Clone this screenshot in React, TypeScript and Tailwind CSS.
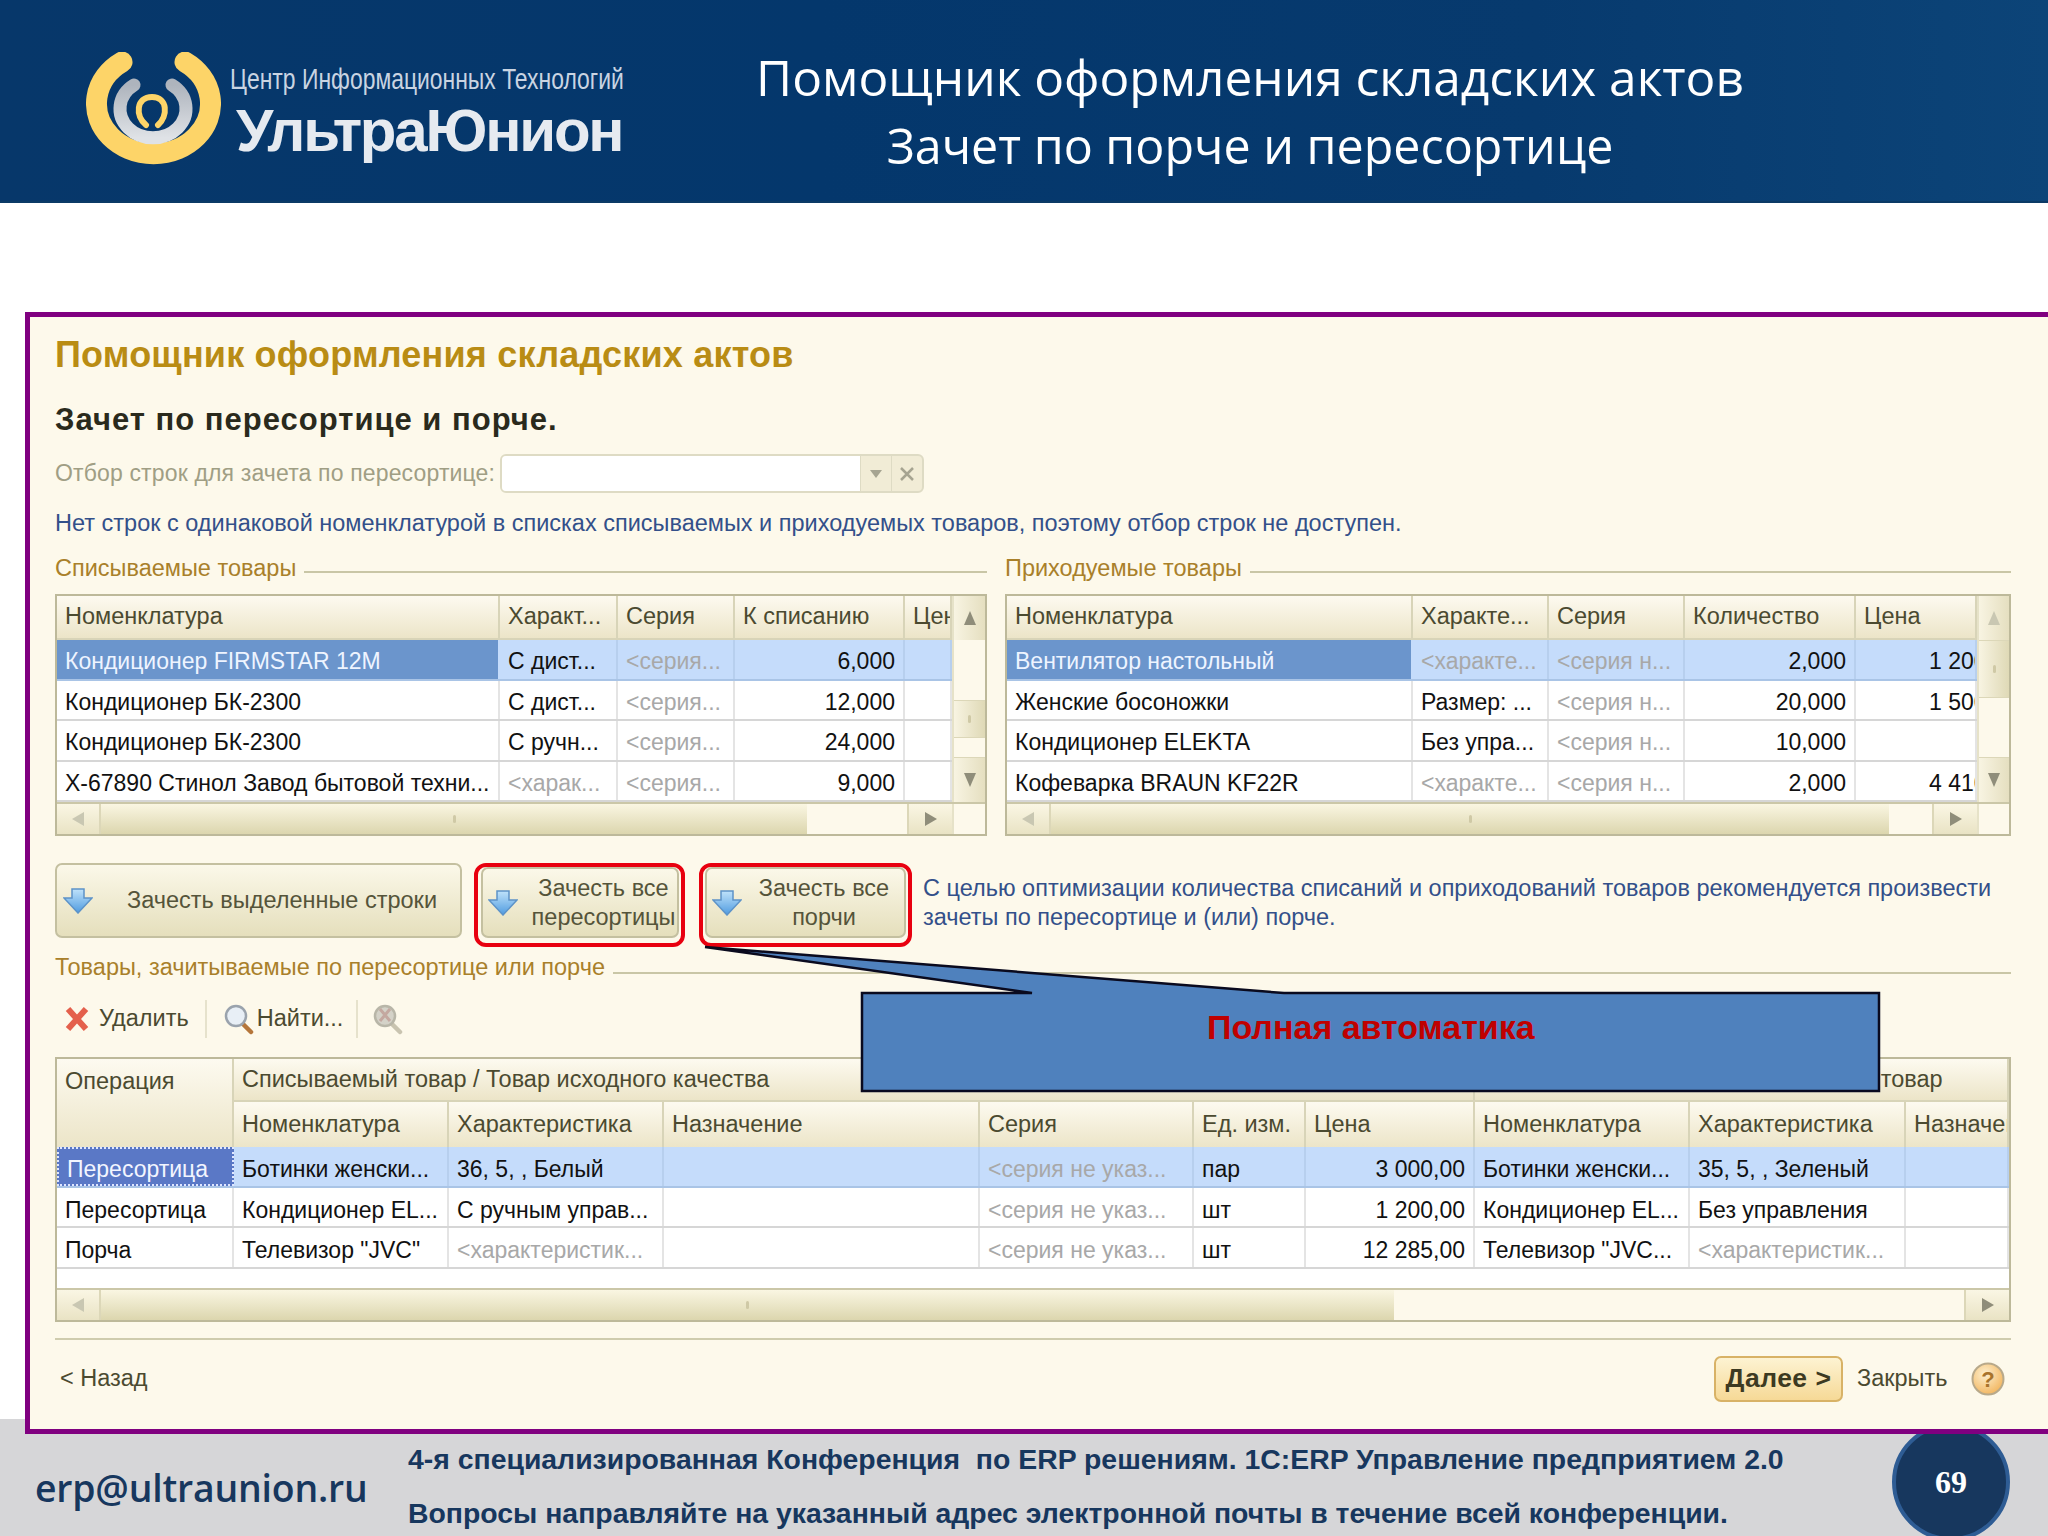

import React from "react";

const headerCell = "flex items-center min-w-0 overflow-hidden whitespace-nowrap pl-2 border-r-2 border-[#d8d4b8] text-[#4b4a30] text-[23.5px] bg-gradient-to-b from-[#fdfaf0] to-[#ece5c8]";
const gridLeft = "grid grid-cols-[443px_118px_117px_170px_47px]";
const gridRight = "grid grid-cols-[406px_136px_136px_171px_121px]";
const gridBottom = "grid grid-cols-[177px_215px_215px_316px_214px_112px_169px_215px_216px_103px]";

type C = { t: string; ph?: boolean; right?: boolean; pl?: boolean };

function Tri({ dir, light }: { dir: "u" | "d" | "l" | "r"; light?: boolean }) {
  const pts = { u: "7,1 13,15 1,15", d: "1,1 13,1 7,15", l: "13,1 13,15 1,8", r: "1,1 1,15 13,8" }[dir];
  return (
    <svg width="14" height="16" viewBox="0 0 14 16">
      <polygon points={pts} fill={light ? "#c9c7b2" : "#8f8d7a"} />
    </svg>
  );
}

function Grip() {
  return <div className="w-[3px] h-[8px] rounded-sm bg-[#cfc9a6]" />;
}

function Row({ grid, cells, selected, bottom }: { grid: string; cells: C[]; selected?: boolean; bottom?: boolean }) {
  return (
    <div className={`${grid} h-[40.5px] border-b-2 ${selected ? "border-[#a9c4e6]" : "border-[#d6d6d6]"}`}>
      {cells.map((c, i) => {
        const sel0 = selected && i === 0;
        let cls = "flex items-center min-w-0 overflow-hidden whitespace-nowrap px-2 border-r-2 ";
        cls += bottom ? "pt-[6px] " : "pt-[4px] ";
        if (sel0 && bottom) cls += "bg-[#5a78c6] text-[#f2f5ff] border-2 border-dotted border-[#dfe6ff] ";
        else if (sel0) cls += "bg-[#6b95cc] text-[#eef4ff] border-[#c5dcfb] ";
        else if (selected) cls += "bg-[#c5dcfb] border-[#b7cfee] ";
        else cls += "bg-white border-[#e4e4e4] ";
        if (!sel0) cls += c.ph ? "text-[#a8a8a8] " : "text-[#111111] ";
        if (c.right) cls += "justify-end ";
        if (c.pl) cls += "pl-[73px] ";
        return (
          <div key={i} className={cls}>
            {c.t}
          </div>
        );
      })}
    </div>
  );
}

function VScroll({ thumbTop, dimUp }: { thumbTop: boolean; dimUp?: boolean }) {
  return (
    <div className="flex-1 min-w-0 flex flex-col bg-[#fdf9eb] border-l-2 border-[#e6e2c8]">
      <div className="h-[44px] flex items-center justify-center bg-gradient-to-r from-[#f8f4e2] to-[#e5dfc0]">
        <Tri dir="u" light={dimUp} />
      </div>
      {thumbTop ? null : <div className="h-[60px]" />}
      <div className={`${thumbTop ? "h-[58px]" : "h-[38px]"} flex items-center justify-center bg-gradient-to-r from-[#f8f4e2] to-[#dfd9b6] border-y border-[#dcd7b8]`}>
        <Grip />
      </div>
      <div className="flex-1" />
      <div className="h-[45px] flex items-center justify-center bg-gradient-to-r from-[#f8f4e2] to-[#e5dfc0] border-t border-[#dcd7b8]">
        <Tri dir="d" />
      </div>
    </div>
  );
}

function HScroll({ thumb, blank, corner }: { thumb: string; blank: string; corner?: boolean }) {
  return (
    <div className="flex h-[32px] flex-1 border-t-2 border-[#cbc7a8] bg-[#fdf9eb]">
      <div className="w-[44px] flex items-center justify-center border-r-2 border-[#dcd7b8] bg-gradient-to-b from-[#faf6e4] to-[#e9e3c4]">
        <Tri dir="l" light />
      </div>
      <div className={`${thumb} flex items-center justify-center bg-gradient-to-b from-[#faf6e2] to-[#dcd6ae]`}>
        <Grip />
      </div>
      <div className={blank} />
      <div className="w-[45px] flex items-center justify-center border-l-2 border-[#dcd7b8] bg-gradient-to-b from-[#faf6e4] to-[#e9e3c4]">
        <Tri dir="r" />
      </div>
      {corner ? <div className="flex-1 border-l-2 border-[#e6e2c8]" /> : null}
    </div>
  );
}

function GroupLabel({ text, lineClass }: { text: string; lineClass: string }) {
  return (
    <div className="flex items-center h-[30px] gap-[8px]">
      <span className="text-[23.5px] text-[#a9802a] whitespace-nowrap">{text}</span>
      <div className={`flex-1 h-[2px] bg-[#c9c6a6] ${lineClass}`} />
    </div>
  );
}

function DownArrow() {
  return (
    <svg width="30" height="26" viewBox="0 0 30 26" className="shrink-0">
      <defs>
        <linearGradient id="arrowFill" x1="0" y1="0" x2="0" y2="1">
          <stop offset="0" stopColor="#bfe2fa" />
          <stop offset="1" stopColor="#4f9be0" />
        </linearGradient>
      </defs>
      <polygon points="9,1 21,1 21,10 29,10 15,25 1,10 9,10" fill="url(#arrowFill)" stroke="#5d93c8" strokeWidth="1.5" />
    </svg>
  );
}

function Lens({ dim }: { dim?: boolean }) {
  return (
    <svg width="32" height="32" viewBox="0 0 32 32">
      <line x1="19" y1="20" x2="28" y2="29" stroke={dim ? "#c9c4b0" : "#b5763a"} strokeWidth="4.5" strokeLinecap="round" />
      <circle cx="13" cy="13" r="10" fill={dim ? "#d4d2c8" : "#e8eff6"} stroke={dim ? "#b8b6a8" : "#9aa3ad"} strokeWidth="2.5" />
      {dim ? <path d="M8 6 L18 18 M18 6 L8 18" stroke="#c4a8a0" strokeWidth="3" /> : null}
    </svg>
  );
}

const leftRows: C[][] = [
  [{ t: "Кондиционер FIRMSTAR 12M" }, { t: "С дист..." }, { t: "<серия...", ph: true }, { t: "6,000", right: true }, { t: "" }],
  [{ t: "Кондиционер БК-2300" }, { t: "С дист..." }, { t: "<серия...", ph: true }, { t: "12,000", right: true }, { t: "" }],
  [{ t: "Кондиционер БК-2300" }, { t: "С ручн..." }, { t: "<серия...", ph: true }, { t: "24,000", right: true }, { t: "" }],
  [{ t: "Х-67890 Стинол Завод бытовой техни..." }, { t: "<харак...", ph: true }, { t: "<серия...", ph: true }, { t: "9,000", right: true }, { t: "" }],
];
const rightRows: C[][] = [
  [{ t: "Вентилятор настольный" }, { t: "<характе...", ph: true }, { t: "<серия н...", ph: true }, { t: "2,000", right: true }, { t: "1 200,00", pl: true }],
  [{ t: "Женские босоножки" }, { t: "Размер: ..." }, { t: "<серия н...", ph: true }, { t: "20,000", right: true }, { t: "1 500,00", pl: true }],
  [{ t: "Кондиционер ELEKTA" }, { t: "Без упра..." }, { t: "<серия н...", ph: true }, { t: "10,000", right: true }, { t: "" }],
  [{ t: "Кофеварка BRAUN KF22R" }, { t: "<характе...", ph: true }, { t: "<серия н...", ph: true }, { t: "2,000", right: true }, { t: "4 410,00", pl: true }],
];
const bottomRows: C[][] = [
  [{ t: "Пересортица" }, { t: "Ботинки женски..." }, { t: "36, 5, , Белый" }, { t: "" }, { t: "<серия не указ...", ph: true }, { t: "пар" }, { t: "3 000,00", right: true }, { t: "Ботинки женски..." }, { t: "35, 5, , Зеленый" }, { t: "" }],
  [{ t: "Пересортица" }, { t: "Кондиционер EL..." }, { t: "С ручным управ..." }, { t: "" }, { t: "<серия не указ...", ph: true }, { t: "шт" }, { t: "1 200,00", right: true }, { t: "Кондиционер EL..." }, { t: "Без управления" }, { t: "" }],
  [{ t: "Порча" }, { t: "Телевизор \"JVC\"" }, { t: "<характеристик...", ph: true }, { t: "" }, { t: "<серия не указ...", ph: true }, { t: "шт" }, { t: "12 285,00", right: true }, { t: "Телевизор \"JVC..." }, { t: "<характеристик...", ph: true }, { t: "" }],
];

const btn = "flex items-center rounded-[7px] border-2 border-[#c4c0a0] bg-gradient-to-b from-[#fbf8e9] to-[#e5dfbc] text-[#55543a] text-[23.5px] leading-[29px]";

export default function App() {
  return (
    <div className="relative w-[2048px] h-[1536px] overflow-hidden bg-white font-['Liberation_Sans',Arial,sans-serif]">
      <header className="h-[203px] flex bg-[linear-gradient(90deg,#07376a_0%,#04376c_40%,#073a6e_75%,#0c4478_100%)] border-b-2 border-[#0b3a66]">
        <div className="w-[640px] pl-[86px] pt-[52px] flex items-start">
          <svg width="135" height="121" viewBox="86 52 135 121" className="shrink-0">
            <defs>
              <linearGradient id="ring" x1="0" y1="0" x2="0" y2="1">
                <stop offset="0" stopColor="#aeb4bd" />
                <stop offset="1" stopColor="#dfe2e6" />
              </linearGradient>
            </defs>
            <path d="M122 62 A 57 50 0 1 0 185 62" fill="none" stroke="#fdd468" strokeWidth="21" strokeLinecap="round" />
            <path d="M134 85 A 33 29 0 1 0 172 85" fill="none" stroke="url(#ring)" strokeWidth="13" strokeLinecap="round" />
            <path d="M146 125 C 135 116 136 97 152 97 C 168 97 168 116 158 125" fill="none" stroke="#fdd468" strokeWidth="6" strokeLinecap="round" />
          </svg>
          <div className="ml-[9px] flex flex-col">
            <div className="text-[29px] leading-[40px] mt-[7px] text-[#c9d4e2] whitespace-nowrap origin-left scale-x-[0.79]">Центр Информационных Технологий</div>
            <div className="text-[60px] leading-[64px] mt-[0px] ml-[6px] font-bold text-[#e6eaf0] whitespace-nowrap tracking-[-2.2px]">УльтраЮнион</div>
          </div>
        </div>
        <div className="flex-1 flex flex-col items-center pt-[43px] pr-[188px] text-white text-[49.6px] leading-[68px] font-['Open_Sans',sans-serif] whitespace-nowrap">
          <div>Помощник оформления складских актов</div>
          <div className="text-[48.4px]">Зачет по порче и пересортице</div>
        </div>
      </header>

      <main className="relative z-10 ml-[25px] mt-[109px] h-[1122px] bg-[#fdf9eb] border-[5px] border-r-0 border-[#800080] pl-[25px] pr-[37px]">
        <h1 className="mt-[18px] h-[40px] flex items-center text-[36px] font-bold tracking-[0.2px] text-[#b98c14] whitespace-nowrap">Помощник оформления складских актов</h1>
        <h2 className="mt-[25px] h-[40px] flex items-center text-[31px] font-bold tracking-[1px] text-[#2a2a1c] whitespace-nowrap">Зачет по пересортице и порче.</h2>

        <div className="mt-[14px] h-[39px] flex items-center">
          <span className="w-[445px] text-[23px] tracking-[0.15px] text-[#a09e84] whitespace-nowrap">Отбор строк для зачета по пересортице:</span>
          <div className="w-[424px] h-[39px] flex rounded-[6px] border-2 border-[#dedbc4] overflow-hidden bg-[#f1ecd6]">
            <div className="w-[358px] bg-white" />
            <div className="w-[32px] flex items-center justify-center border-x border-[#dedbc4]">
              <svg width="14" height="10" viewBox="0 0 14 10"><polygon points="1,1 13,1 7,9" fill="#a6a491" /></svg>
            </div>
            <div className="flex-1 flex items-center justify-center">
              <svg width="16" height="16" viewBox="0 0 16 16"><path d="M2 2 L14 14 M14 2 L2 14" stroke="#a6a491" strokeWidth="2.5" /></svg>
            </div>
          </div>
        </div>

        <p className="mt-[16px] h-[30px] flex items-center text-[23.5px] text-[#33508a] whitespace-nowrap">Нет строк с одинаковой номенклатурой в списках списываемых и приходуемых товаров, поэтому отбор строк не доступен.</p>

        <div className="mt-[15px] flex gap-[18px] text-[23px]">
          <section className="w-[932px]">
            <GroupLabel text="Списываемые товары" lineClass="mt-[5px]" />
            <div className="mt-[10px] h-[242px] border-2 border-[#bdb99a] flex flex-col">
              <div className="flex h-[206px]">
                <div className="shrink-0 flex flex-col">
                  <div className={`${gridLeft} h-[44px] border-b-2 border-[#d8d4b8]`}>
                    {["Номенклатура", "Характ...", "Серия", "К списанию", "Цена"].map((h) => (
                      <div key={h} className={headerCell}>{h}</div>
                    ))}
                  </div>
                  {leftRows.map((r, i) => (
                    <Row key={i} grid={gridLeft} cells={r} selected={i === 0} />
                  ))}
                </div>
                <VScroll thumbTop={false} />
              </div>
              <div className="flex flex-1">
                <HScroll thumb="w-[706px]" blank="w-[100px]" corner />
              </div>
            </div>
          </section>
          <section className="w-[1006px]">
            <GroupLabel text="Приходуемые товары" lineClass="mt-[5px]" />
            <div className="mt-[10px] h-[242px] border-2 border-[#bdb99a] flex flex-col">
              <div className="flex h-[206px]">
                <div className="shrink-0 flex flex-col">
                  <div className={`${gridRight} h-[44px] border-b-2 border-[#d8d4b8]`}>
                    {["Номенклатура", "Характе...", "Серия", "Количество", "Цена"].map((h) => (
                      <div key={h} className={headerCell}>{h}</div>
                    ))}
                  </div>
                  {rightRows.map((r, i) => (
                    <Row key={i} grid={gridRight} cells={r} selected={i === 0} />
                  ))}
                </div>
                <VScroll thumbTop dimUp />
              </div>
              <div className="flex flex-1">
                <HScroll thumb="w-[838px]" blank="w-[43px]" corner />
              </div>
            </div>
          </section>
        </div>

        <div className="mt-[27px] h-[84px] flex items-start">
          <button className={`${btn} w-[407px] h-[75px] pl-[6px]`}>
            <DownArrow />
            <span className="ml-[34px] whitespace-nowrap">Зачесть выделенные строки</span>
          </button>
          <div className="ml-[12px] w-[211px] h-[84px] border-4 border-[#e8000f] rounded-[12px] pl-[3px] pt-[0px]">
            <button className={`${btn} w-[198px] h-[71px] pl-[5px]`}>
              <DownArrow />
              <span className="flex-1 text-center pl-[12px] whitespace-nowrap">Зачесть все<br />пересортицы</span>
            </button>
          </div>
          <div className="ml-[14px] w-[213px] h-[84px] border-4 border-[#e8000f] rounded-[12px] pl-[2px] pt-[0px]">
            <button className={`${btn} w-[201px] h-[71px] pl-[5px]`}>
              <DownArrow />
              <span className="flex-1 text-center pl-[2px] whitespace-nowrap">Зачесть все<br />порчи</span>
            </button>
          </div>
          <p className="ml-[11px] mt-[11px] text-[23.5px] leading-[29px] text-[#33508a] whitespace-nowrap">С целью оптимизации количества списаний и оприходований товаров рекомендуется произвести<br />зачеты по пересортице и (или) порче.</p>
        </div>

        <div className="mt-[6px]">
          <GroupLabel text="Товары, зачитываемые по пересортице или порче" lineClass="mt-[10px]" />
        </div>

        <div className="mt-[16px] h-[40px] flex items-center text-[23.5px] text-[#4b4a30]">
          <svg width="26" height="26" viewBox="0 0 26 26" className="ml-[9px]">
            <path d="M4 3 L22 23 M22 3 L4 23" stroke="#e4604c" strokeWidth="6" />
          </svg>
          <span className="ml-[9px]">Удалить</span>
          <div className="ml-[16px] w-[2px] h-[38px] bg-[#e6e2cc]" />
          <div className="ml-[16px]"><Lens /></div>
          <span className="ml-[2px]">Найти...</span>
          <div className="ml-[13px] w-[2px] h-[38px] bg-[#e6e2cc]" />
          <div className="ml-[14px]"><Lens dim /></div>
        </div>

        <div className="mt-[18px] h-[265px] border-2 border-[#bdb99a] flex flex-col text-[23px]">
          <div className={`${gridBottom} grid-rows-[43px_45px]`}>
            <div className={`${headerCell} row-span-2 items-start pt-[5px]`}>Операция</div>
            <div className={`${headerCell} col-span-6 border-b-2`}>Списываемый товар / Товар исходного качества</div>
            <div className={`${headerCell} col-span-3 border-b-2`}>Приходуемый товар / Приходуемый товар</div>
            {["Номенклатура", "Характеристика", "Назначение", "Серия", "Ед. изм.", "Цена", "Номенклатура", "Характеристика", "Назначение"].map((h, i) => (
              <div key={i} className={headerCell}>{h}</div>
            ))}
          </div>
          {bottomRows.map((r, i) => (
            <Row key={i} grid={gridBottom} cells={r} selected={i === 0} bottom />
          ))}
          <div className="flex-1 bg-white" />
          <div className="flex">
            <HScroll thumb="w-[1293px]" blank="flex-1" />
          </div>
        </div>

        <div className="mt-[16px] h-[2px] bg-[#cfccae]" />

        <div className="mt-[16px] h-[46px] flex items-center text-[23.5px] text-[#4b4a30]">
          <span className="ml-[5px]">&lt; Назад</span>
          <div className="flex-1" />
          <button className="w-[129px] h-[46px] rounded-[7px] border-2 border-[#d8b266] bg-gradient-to-b from-[#fdf3d2] to-[#f6d996] font-bold text-[26.5px] tracking-[0.5px] text-[#3d3a22]">Далее &gt;</button>
          <span className="ml-[14px] w-[114px]">Закрыть</span>
          <svg width="34" height="34" viewBox="0 0 34 34" className="mr-[6px]">
            <defs>
              <radialGradient id="help" cx="0.4" cy="0.35" r="0.7">
                <stop offset="0" stopColor="#fdf0cf" />
                <stop offset="1" stopColor="#f2b45c" />
              </radialGradient>
            </defs>
            <circle cx="17" cy="17" r="15.5" fill="url(#help)" stroke="#b8a98a" strokeWidth="2" />
            <text x="17" y="25" textAnchor="middle" fontSize="22" fontWeight="bold" fill="#a8742c">?</text>
          </svg>
        </div>
      </main>

      <footer className="relative -mt-[15px] h-[117px] bg-[#d6d6d8] text-[#17375e]">
        <div className="absolute left-[35px] top-[44px] text-[37.4px] leading-[50px] font-semibold font-['Open_Sans',sans-serif] tracking-[-0.2px] whitespace-nowrap">erp@ultraunion.ru</div>
        <div className="pl-[408px] pt-[13px] text-[28.4px] font-bold leading-[54px] whitespace-nowrap">
          <div>4-я специализированная Конференция&nbsp; по ERP решениям. 1С:ERP Управление предприятием 2.0</div>
          <div>Вопросы направляйте на указанный адрес электронной почты в течение всей конференции.</div>
        </div>
        <div className="absolute left-[1892px] top-[4px] w-[118px] h-[118px] rounded-full bg-[#17375e] border-4 border-[#2e5c94] flex items-center justify-center text-white font-bold text-[32px] font-['Liberation_Serif',serif]">69</div>
      </footer>

      <svg width="1190" height="150" viewBox="700 945 1190 150" className="absolute left-[700px] top-[945px] z-20 w-[1190px] h-[150px]">
        <polygon points="705,947 1032,993 862,993 862,1091 1879,1091 1879,993 1284,993" fill="#4f81bd" stroke="#0a0a1e" strokeWidth="2.5" />
      </svg>
      <div className="absolute z-20 left-[1207px] top-[1007px] text-[34px] leading-[40px] font-bold text-[#c00000] whitespace-nowrap">Полная автоматика</div>
    </div>
  );
}
